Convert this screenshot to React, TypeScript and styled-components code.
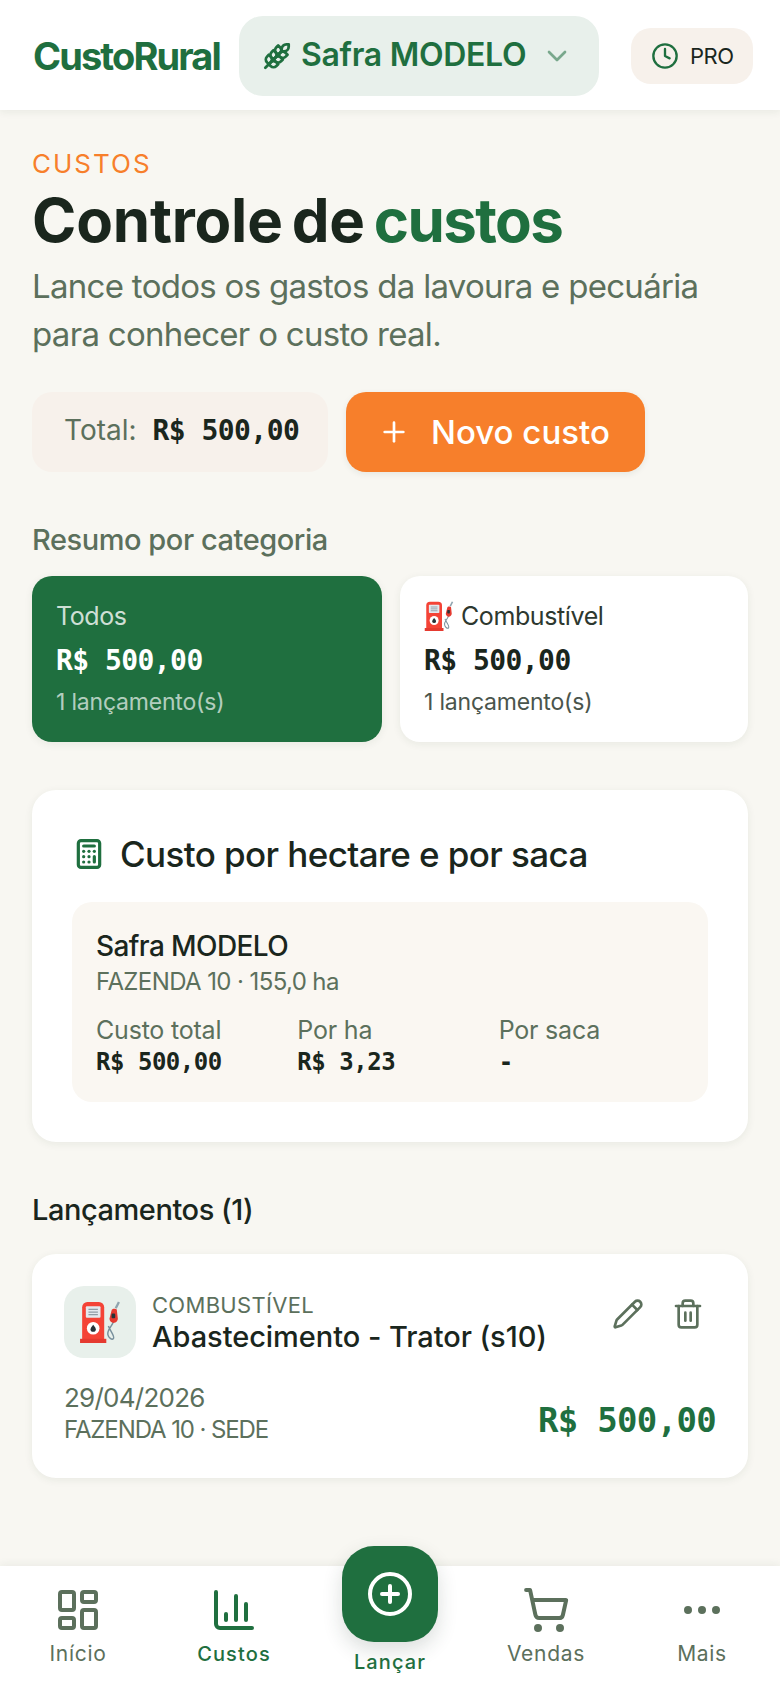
import React from 'react'
import styled, { createGlobalStyle } from 'styled-components'
import {
  BarChart3,
  Calculator,
  ChevronDown,
  CirclePlus,
  Clock,
  Ellipsis,
  LayoutDashboard,
  Pencil,
  Plus,
  ShoppingCart,
  Trash2,
  Wheat,
} from 'lucide-react'

const green = '#1f6f3f'
const dark = '#1a261d'
const muted = '#5c705c'
const orange = '#f77f2b'
const sans = '"Inter", "Noto Sans", sans-serif'
const mono = '"DejaVu Sans Mono", "Liberation Mono", monospace'

const GlobalStyle = createGlobalStyle`
  html, body {
    margin: 0;
    padding: 0;
    background: #f8f7f2;
    font-family: ${sans};
  }
  * {
    box-sizing: border-box;
  }
`

const Page = styled.div`
  display: flex;
  flex-direction: column;
  width: 780px;
  min-height: 1688px;
  background: #f8f7f2;
  color: ${dark};
`

const Header = styled.header`
  display: flex;
  align-items: center;
  height: 110px;
  padding: 2px 27px 0 33px;
  background: #fff;
  box-shadow: 0 2px 8px rgba(30, 50, 35, 0.07);
`

const Logo = styled.div`
  width: 206px;
  font-size: 38px;
  font-weight: 700;
  letter-spacing: -1.9px;
  color: ${green};
`

const SafraSelect = styled.div`
  display: flex;
  align-items: center;
  justify-content: space-between;
  width: 360px;
  height: 80px;
  padding: 0 26px 0 24px;
  border-radius: 24px;
  background: #e8f0eb;
  color: ${green};
`

const SafraName = styled.span`
  flex: 1;
  margin-left: 10px;
  padding-bottom: 4px;
  font-size: 32px;
  font-weight: 600;
  letter-spacing: -0.3px;
  white-space: nowrap;
`

const ProBadge = styled.div`
  display: flex;
  align-items: center;
  gap: 11px;
  width: 122px;
  height: 56px;
  margin-left: auto;
  padding-left: 20px;
  border-radius: 20px;
  background: #f7f1eb;
  color: ${green};
  font-size: 22px;
  letter-spacing: -0.5px;

  span {
    color: ${dark};
  }
`

const Main = styled.main`
  flex: 1;
  padding: 38px 32px 0;
`

const Eyebrow = styled.div`
  font-size: 26px;
  line-height: 32px;
  letter-spacing: 2px;
  color: ${orange};
`

const Title = styled.h1`
  margin: 6px 0 0;
  font-size: 60px;
  line-height: 68px;
  font-weight: 700;
  letter-spacing: -0.2px;
  word-spacing: -5px;
  color: ${dark};

  em {
    font-style: normal;
    letter-spacing: -1.6px;
    color: ${green};
  }
`

const Subtitle = styled.p`
  margin: 8px 0 0;
  font-size: 33px;
  line-height: 48px;
  letter-spacing: -0.7px;
  color: ${muted};
`

const ActionRow = styled.div`
  display: flex;
  gap: 18px;
  margin-top: 34px;
`

const TotalPill = styled.div`
  display: flex;
  align-items: center;
  gap: 16px;
  width: 296px;
  height: 80px;
  padding: 0 0 4px 32px;
  border-radius: 20px;
  background: #f7f1eb;
  font-size: 28px;
  color: ${muted};
`

const Money = styled.span<{ $size: number; $color?: string }>`
  font-family: ${mono};
  font-weight: 700;
  font-size: ${(p) => p.$size}px;
  letter-spacing: -0.02em;
  color: ${(p) => p.$color || dark};
  white-space: nowrap;
`

const EntryAmount = styled(Money)`
  margin-top: 12px;
`

const NewButton = styled.button`
  display: flex;
  align-items: center;
  gap: 21px;
  width: 299px;
  height: 80px;
  padding: 0 0 0 32px;
  border: 0;
  border-radius: 20px;
  background: ${orange};
  box-shadow: 0 2px 6px rgba(30, 50, 35, 0.08);
  color: #fff;
  font-family: ${sans};
  font-size: 33px;
  font-weight: 500;
`

const SectionLabel = styled.div<{ $strong?: boolean }>`
  margin-top: 48px;
  font-size: 29px;
  line-height: 40px;
  font-weight: 500;
  letter-spacing: -0.45px;
  color: ${(p) => (p.$strong ? dark : muted)};
`

const CategoryGrid = styled.div`
  display: grid;
  grid-template-columns: 350px 348px;
  gap: 18px;
  margin-top: 16px;
`

const CategoryCard = styled.div<{ $active?: boolean }>`
  height: 166px;
  padding: 22px 24px 0;
  border-radius: 20px;
  background: ${(p) => (p.$active ? green : '#fff')};
  color: ${(p) => (p.$active ? '#fff' : dark)};
  box-shadow: 0 2px 8px rgba(30, 50, 35, 0.07);
`

const CategoryName = styled.div<{ $active?: boolean }>`
  display: flex;
  align-items: center;
  gap: 7px;
  height: 36px;
  font-size: 25px;
  letter-spacing: -0.4px;
  color: ${(p) => (p.$active ? 'rgba(255, 255, 255, 0.8)' : '#2d382f')};
`

const CategoryMoney = styled.div`
  margin-top: 8px;
  line-height: 38px;
`

const CategoryCount = styled.div<{ $active?: boolean }>`
  margin-top: 3px;
  font-size: 23px;
  line-height: 32px;
  letter-spacing: -0.2px;
  color: ${(p) => (p.$active ? 'rgba(255, 255, 255, 0.68)' : '#4a554c')};
`

const CostCard = styled.section`
  margin-top: 48px;
  padding: 40px;
  border-radius: 24px;
  background: #fff;
  box-shadow: 0 2px 8px rgba(30, 50, 35, 0.07);
`

const CostHeading = styled.h2`
  display: flex;
  align-items: center;
  gap: 15px;
  height: 48px;
  margin: 0 0 24px;
  font-size: 35px;
  font-weight: 500;
  letter-spacing: -0.6px;
  color: ${dark};

  svg {
    color: ${green};
    margin-left: 1px;
  }
`

const HarvestBox = styled.div`
  height: 200px;
  padding: 24px;
  border-radius: 20px;
  background: #faf7f2;
`

const HarvestName = styled.div`
  font-size: 28px;
  line-height: 40px;
  font-weight: 500;
  letter-spacing: -0.6px;
`

const HarvestFarm = styled.div`
  font-size: 24px;
  line-height: 32px;
  letter-spacing: -0.6px;
  color: ${muted};
`

const MetricGrid = styled.div`
  display: grid;
  grid-template-columns: repeat(3, 1fr);
  gap: 16px;
  margin-top: 16px;
`

const MetricLabel = styled.div`
  font-size: 25px;
  line-height: 32px;
  letter-spacing: -0.2px;
  color: ${muted};
`

const MetricValue = styled.div`
  margin-top: 1px;
  line-height: 30px;
`

const EntryCard = styled.article`
  margin-top: 24px;
  padding: 32px;
  border-radius: 24px;
  background: #fff;
  box-shadow: 0 2px 8px rgba(30, 50, 35, 0.07);
`

const EntryTop = styled.div`
  display: flex;
  align-items: flex-start;
  height: 72px;
`

const IconTile = styled.div`
  display: flex;
  align-items: center;
  justify-content: center;
  width: 72px;
  height: 72px;
  margin-right: 16px;
  border-radius: 20px;
  background: #e8f0eb;
`

const EntryInfo = styled.div`
  flex: 1;
  padding-top: 3px;
`

const EntryCategory = styled.div`
  font-size: 22px;
  line-height: 32px;
  letter-spacing: 0.3px;
  color: ${muted};
`

const EntryTitle = styled.div`
  font-size: 29px;
  line-height: 32px;
  font-weight: 500;
  letter-spacing: -0.05px;
  white-space: nowrap;
`

const EntryActions = styled.div`
  display: flex;
  gap: 28px;
  margin: 12px 12px 0 0;
  color: ${muted};
`

const EntryBottom = styled.div`
  display: flex;
  align-items: center;
  justify-content: space-between;
  margin-top: 24px;
`

const EntryMeta = styled.div`
  font-size: 26px;
  line-height: 32px;
  letter-spacing: -0.75px;
  color: ${muted};
`

const EntryPlace = styled.div`
  font-size: 24px;
  letter-spacing: -1.1px;
`

const BottomNav = styled.nav`
  display: grid;
  grid-template-columns: repeat(5, 156px);
  align-items: start;
  height: 122px;
  margin-top: 86px;
  background: #fff;
  box-shadow: 0 -2px 8px rgba(30, 50, 35, 0.06);
`

const NavItem = styled.div<{ $active?: boolean }>`
  display: flex;
  flex-direction: column;
  align-items: center;
  gap: 6px;
  padding-top: 20px;
  color: ${(p) => (p.$active ? green : muted)};
  font-size: ${(p) => (p.$active ? 20 : 21)}px;
  line-height: 28px;
  font-weight: ${(p) => (p.$active ? 500 : 400)};
  letter-spacing: ${(p) => (p.$active ? 1.1 : 0.7)}px;
`

const CenterItem = styled(NavItem)`
  padding-top: 0;
  margin-top: -20px;
  color: ${green};
  font-size: 20px;
  font-weight: 500;
  letter-spacing: 1.1px;
`

const Fab = styled.div`
  display: flex;
  align-items: center;
  justify-content: center;
  width: 96px;
  height: 96px;
  border-radius: 32px;
  background: ${green};
  color: #fff;
  box-shadow: 0 8px 20px rgba(30, 50, 35, 0.16);
`

const PumpIcon: React.FC<{ size: number }> = ({ size }) => (
  <svg width={size} height={size} viewBox="0 0 40 40" fill="none">
    <path d="M3 6a5 5 0 0 1 5-5h11a5 5 0 0 1 5 5v31H3z" fill="#f44336" />
    <rect x="1" y="36" width="25" height="4" fill="#e53a30" />
    <rect x="6.500" y="5" width="14" height="11" rx="1" fill="#e4e9ee" />
    <path d="M9 8h9M9 10.500h9M9 13h9" stroke="#8f9ca5" strokeWidth="1.2" />
    <circle cx="13.500" cy="26" r="6" fill="#fff" />
    <path d="M13.500 22.500c1.600 2 2.500 3.200 2.500 4.400a2.500 2.500 0 0 1-5 0c0-1.200.9-2.400 2.500-4.400z" fill="#263238" />
    <path
      d="M33 19c-1 5-6.500 8-5.500 13 .6 3 3.800 5.500 5.300 3.800 1.700-2-3-7-4.800-12"
      stroke="#78909c"
      strokeWidth="1.4"
    />
    <path d="M38 1l-3 6" stroke="#90a4ae" strokeWidth="2.2" />
    <path d="M31 9c0-2 4-2 5-1l1 9c0 2-2 4-4 4s-4-2-4-4z" fill="#e53a30" />
    <rect x="31" y="12" width="3.500" height="4.500" rx="1" fill="#263238" />
  </svg>
)

export default function App() {
  return (
    <Page>
      <GlobalStyle />
      <Header>
        <Logo>CustoRural</Logo>
        <SafraSelect>
          <Wheat size={28} strokeWidth={2.4} />
          <SafraName>Safra MODELO</SafraName>
          <ChevronDown size={32} strokeWidth={2} opacity={0.55} />
        </SafraSelect>
        <ProBadge>
          <Clock size={28} strokeWidth={2} />
          <span>PRO</span>
        </ProBadge>
      </Header>

      <Main>
        <Eyebrow>CUSTOS</Eyebrow>
        <Title>
          Controle de <em>custos</em>
        </Title>
        <Subtitle>
          Lance todos os gastos da lavoura e pecuária
          <br />
          para conhecer o custo real.
        </Subtitle>

        <ActionRow>
          <TotalPill>
            Total:
            <Money $size={28}>R$ 500,00</Money>
          </TotalPill>
          <NewButton>
            <Plus size={32} strokeWidth={2} />
            Novo custo
          </NewButton>
        </ActionRow>

        <SectionLabel>Resumo por categoria</SectionLabel>
        <CategoryGrid>
          <CategoryCard $active>
            <CategoryName $active>Todos</CategoryName>
            <CategoryMoney>
              <Money $size={28} $color="#fff">R$ 500,00</Money>
            </CategoryMoney>
            <CategoryCount $active>1 lançamento(s)</CategoryCount>
          </CategoryCard>
          <CategoryCard>
            <CategoryName>
              <PumpIcon size={30} />
              Combustível
            </CategoryName>
            <CategoryMoney>
              <Money $size={28}>R$ 500,00</Money>
            </CategoryMoney>
            <CategoryCount>1 lançamento(s)</CategoryCount>
          </CategoryCard>
        </CategoryGrid>

        <CostCard>
          <CostHeading>
            <Calculator size={32} strokeWidth={2.4} />
            Custo por hectare e por saca
          </CostHeading>
          <HarvestBox>
            <HarvestName>Safra MODELO</HarvestName>
            <HarvestFarm>FAZENDA 10 · 155,0 ha</HarvestFarm>
            <MetricGrid>
              <div>
                <MetricLabel>Custo total</MetricLabel>
                <MetricValue>
                  <Money $size={24}>R$ 500,00</Money>
                </MetricValue>
              </div>
              <div>
                <MetricLabel>Por ha</MetricLabel>
                <MetricValue>
                  <Money $size={24}>R$ 3,23</Money>
                </MetricValue>
              </div>
              <div>
                <MetricLabel>Por saca</MetricLabel>
                <MetricValue>
                  <Money $size={24}>-</Money>
                </MetricValue>
              </div>
            </MetricGrid>
          </HarvestBox>
        </CostCard>

        <SectionLabel $strong>Lançamentos (1)</SectionLabel>
        <EntryCard>
          <EntryTop>
            <IconTile>
              <PumpIcon size={42} />
            </IconTile>
            <EntryInfo>
              <EntryCategory>COMBUSTÍVEL</EntryCategory>
              <EntryTitle>Abastecimento - Trator (s10)</EntryTitle>
            </EntryInfo>
            <EntryActions>
              <Pencil size={32} strokeWidth={2} />
              <Trash2 size={32} strokeWidth={2} />
            </EntryActions>
          </EntryTop>
          <EntryBottom>
            <EntryMeta>
              29/04/2026
              <EntryPlace>FAZENDA 10 · SEDE</EntryPlace>
            </EntryMeta>
            <EntryAmount $size={34} $color={green}>R$ 500,00</EntryAmount>
          </EntryBottom>
        </EntryCard>
      </Main>

      <BottomNav>
        <NavItem>
          <LayoutDashboard size={48} strokeWidth={2} />
          Início
        </NavItem>
        <NavItem $active>
          <BarChart3 size={48} strokeWidth={2} />
          Custos
        </NavItem>
        <CenterItem>
          <Fab>
            <CirclePlus size={48} strokeWidth={2} />
          </Fab>
          Lançar
        </CenterItem>
        <NavItem>
          <ShoppingCart size={48} strokeWidth={2} />
          Vendas
        </NavItem>
        <NavItem>
          <Ellipsis size={48} strokeWidth={2} />
          Mais
        </NavItem>
      </BottomNav>
    </Page>
  )
}
